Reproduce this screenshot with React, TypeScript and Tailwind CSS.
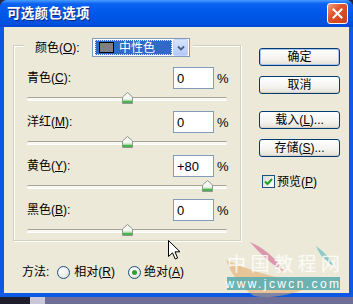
import React from 'react';

// Photoshop "可选颜色选项" dialog, Windows XP Luna look

const FONT = "font-['Liberation_Sans','Noto_Sans_CJK_SC',sans-serif]";

type Row = { name: string; key: string; value: number };

const rows: Row[] = [
    { name: '青色', key: 'C', value: 0 },
    { name: '洋红', key: 'M', value: 0 },
    { name: '黄色', key: 'Y', value: 80 },
    { name: '黑色', key: 'B', value: 0 },
];

function Label({ name, k }: { name: string; k: string }) {
    return (
        <span>
            {name}(<span className="underline">{k}</span>):
        </span>
    );
}

function Thumb() {
    return (
        <svg width="11" height="12" viewBox="0 0 11 12">
            <path d="M5.5 0.5 L10.5 5 L10.5 11.5 L0.5 11.5 L0.5 5 Z" fill="#f6f6f2" stroke="#8a9a90" />
            <rect x="1" y="8.5" width="9" height="2.5" fill="#4cb24c" />
            <rect x="1" y="7.5" width="9" height="1" fill="#b6e2b0" />
        </svg>
    );
}

function Slider({ value }: { value: number }) {
    const left = ((value + 100) / 200) * 200 - 5;
    return (
        <div className="relative h-[22px] ml-[13px] w-[200px]">
            <div className="absolute left-0 right-0 top-[8px] h-[3px] rounded-full border-t border-[#a5a497] bg-[#f8f7f2] shadow-[0_1px_0_#ffffff]" />
            <div className="absolute top-[3px]" style={{ left }}>
                <Thumb />
            </div>
        </div>
    );
}

function XPButton({ children, isDefault = false }: { children: React.ReactNode; isDefault?: boolean }) {
    return (
        <div
            className={`h-[18px] w-[81px] rounded-[3px] border border-[#003c74] bg-[linear-gradient(180deg,#ffffff_0%,#f4f3ee_60%,#e3e0d6_100%)] flex items-center justify-center text-[12px] leading-none text-black ${
                isDefault ? 'shadow-[inset_0_0_0_1px_#a9c3f3]' : 'shadow-[inset_0_-1px_0_#d6d0c5]'
            }`}
        >
            {children}
        </div>
    );
}

function Radio({ checked }: { checked?: boolean }) {
    return (
        <div className="w-[13px] h-[13px] rounded-full border border-[#1c5180] bg-[radial-gradient(circle_at_35%_35%,#ffffff,#dcdad2)] flex items-center justify-center">
            {checked && <div className="w-[5px] h-[5px] rounded-full bg-[#2fa32f]" />}
        </div>
    );
}

export default function App() {
    return (
        <div className={`relative w-[353px] h-[304px] overflow-hidden bg-[#262636] ${FONT}`}>
            {/* window */}
            <div className="h-[297px] flex flex-col bg-[#0a5ae6] rounded-t-[7px]">
                {/* title bar */}
                <div className="h-[27px] flex items-center justify-between pl-[7px] pr-[5px] rounded-t-[7px] bg-[linear-gradient(180deg,#4a9bff_0%,#0a62f2_14%,#0058e8_50%,#0050de_88%,#0046d2_100%)]">
                    <span className="text-white font-bold text-[13.5px] leading-none tracking-[0.3px] [text-shadow:1px_1px_0_#0a2a80]">
                        可选颜色选项
                    </span>
                    <div className="w-[21px] h-[21px] rounded-[3px] border border-white bg-[linear-gradient(135deg,#f0a080_0%,#e0542c_40%,#c8401c_100%)] flex items-center justify-center">
                        <svg width="11" height="11" viewBox="0 0 11 11">
                            <path d="M1.5 1.5 L9.5 9.5 M9.5 1.5 L1.5 9.5" stroke="white" strokeWidth="2" strokeLinecap="square" />
                        </svg>
                    </div>
                </div>

                {/* body */}
                <div className="flex-1 mx-[4px] mb-[4px] bg-[#ece9d8] flex text-[12px] text-black">
                    {/* left column */}
                    <div className="pl-[9px] pt-[18px] flex flex-col">
                        <div className="h-[196px] w-[228px] border border-[#d0d0bf] shadow-[inset_1px_1px_0_#ffffff,1px_1px_0_#ffffff]">
                            {/* legend */}
                            <div className="-mt-[8px] ml-[10px] w-[169px] h-[19px] bg-[#ece9d8] flex items-center">
                                <span className="pl-[11px] leading-none">
                                    颜色(<span className="underline">O</span>):
                                </span>
                                <div className="ml-auto mr-[3px] w-[98px] h-[19px] border border-[#7f9db9] bg-white flex items-center pl-[2px] pr-[1px]">
                                    <div className="w-[77px] h-[15px] bg-[#316ac5] outline-1 outline-dotted outline-[#e8e8e8] -outline-offset-1 flex items-center pl-[4px]">
                                        <div className="w-[15px] h-[11px] border border-black bg-[#808080]" />
                                        <span className="ml-[5px] text-white leading-none">中性色</span>
                                    </div>
                                    <div className="ml-auto w-[15px] h-[17px] rounded-[2px] bg-[linear-gradient(180deg,#d8e4fc,#b4c8f6)] border border-[#c3d3fd] flex items-center justify-center">
                                        <svg width="8" height="6" viewBox="0 0 8 6">
                                            <path d="M1 1.5 L4 4.5 L7 1.5" stroke="#4d6185" strokeWidth="1.8" fill="none" />
                                        </svg>
                                    </div>
                                </div>
                            </div>

                            <div className="mt-[10px] flex flex-col">
                                {rows.map((r) => (
                                    <div key={r.key}>
                                        <div className="h-[22px] flex items-center">
                                            <div className="w-[159px] pl-[13px] leading-none">
                                                <Label name={r.name} k={r.key} />
                                            </div>
                                            <div className="w-[41px] h-[22px] border border-[#7f9db9] bg-white flex items-center pl-[3px] text-[13px] leading-none">
                                                {r.value > 0 ? `+${r.value}` : r.value}
                                            </div>
                                            <span className="ml-[3px] text-[13px] leading-none">%</span>
                                        </div>
                                        <Slider value={r.value} />
                                    </div>
                                ))}
                            </div>
                        </div>

                        {/* method */}
                        <div className="mt-[22px] ml-[9px] h-[18px] flex items-center leading-none">
                            <span>方法:</span>
                            <div className="ml-[8px]">
                                <Radio />
                            </div>
                            <span className="ml-[4px]">
                                相对(<span className="underline">R</span>)
                            </span>
                            <div className="ml-[13px]">
                                <Radio checked />
                            </div>
                            <span className="ml-[3px]">
                                绝对(<span className="underline">A</span>)
                            </span>
                        </div>
                    </div>

                    {/* right column */}
                    <div className="ml-[18px] pt-[21px] flex flex-col">
                        <XPButton isDefault>确定</XPButton>
                        <div className="mt-[10px]">
                            <XPButton>取消</XPButton>
                        </div>
                        <div className="mt-[17px]">
                            <XPButton>
                                载入(<span className="underline">L</span>)...
                            </XPButton>
                        </div>
                        <div className="mt-[10px]">
                            <XPButton>
                                存储(<span className="underline">S</span>)...
                            </XPButton>
                        </div>
                        <div className="mt-[18px] ml-[3px] flex items-center leading-none">
                            <div className="w-[13px] h-[13px] border border-[#1c5180] bg-[linear-gradient(135deg,#dcdad0,#ffffff)] flex items-center justify-center">
                                <svg width="9" height="9" viewBox="0 0 9 9">
                                    <path d="M1 4.5 L3.5 7 L8 2" stroke="#21a121" strokeWidth="2" fill="none" />
                                </svg>
                            </div>
                            <span className="ml-[2px]">
                                预览(<span className="underline">P</span>)
                            </span>
                        </div>
                    </div>
                </div>
            </div>

            {/* desktop strip under the window */}
            <div className="h-[7px] flex">
                <div className="w-[30px] bg-[#1e1e2c]" />
                <div className="w-[15px] bg-[#c8c8d8]" />
                <div className="flex-1 bg-[#6e6e96]" />
            </div>

            {/* watermark */}
            <div className="absolute left-[224px] top-[238px] w-[120px] h-[62px] pointer-events-none">
                <svg className="absolute inset-0" width="120" height="62" viewBox="0 0 120 62">
                    <path d="M26 4 C40 10 52 20 60 34 C48 26 38 18 26 4 Z" fill="#d77aa0" opacity="0.75" />
                    <path d="M92 8 C100 14 106 20 110 28 C102 24 96 18 92 8 Z" fill="#69bcbc" opacity="0.7" />
                    <path d="M2 22 C30 34 60 44 94 44 C80 54 50 62 30 58 C18 50 8 38 2 22 Z" fill="#e3a866" opacity="0.55" />
                </svg>
                <div className="absolute left-[3px] top-[15px] whitespace-nowrap text-[19px] leading-none tracking-[4.5px] text-white/80 font-['Noto_Sans_CJK_SC',sans-serif]">
                    中国教程网
                </div>
                <div className="absolute left-[3px] top-[39px] w-[113px] h-[13px] bg-[#5eaeb0]/90 flex items-center justify-center whitespace-nowrap text-white text-[12px] leading-none tracking-[2.4px] font-['Liberation_Sans',sans-serif]">
                    www.jcwcn.com
                </div>
            </div>

            {/* mouse cursor */}
            <svg className="absolute left-[168px] top-[240px]" width="13" height="21" viewBox="0 0 13 21">
                <path d="M0.5 0.5 L0.5 16.5 L4.5 12.8 L7.2 19 L9.6 18 L7 11.8 L12 11.8 Z" fill="white" stroke="black" strokeWidth="1" strokeLinejoin="miter" />
            </svg>
        </div>
    );
}
